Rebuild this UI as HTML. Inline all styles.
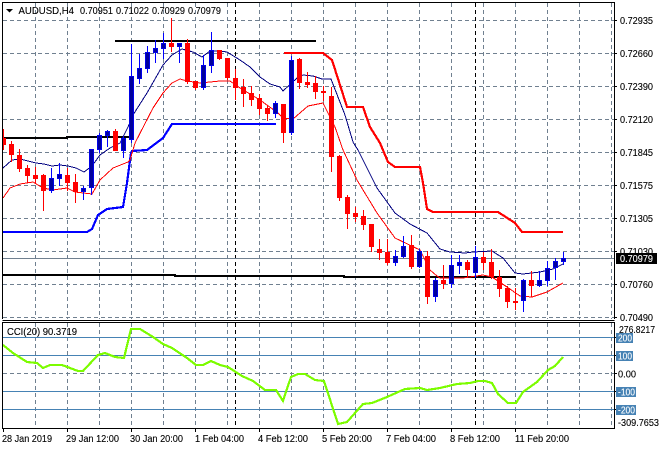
<!DOCTYPE html>
<html>
<head>
<meta charset="utf-8">
<style>
html,body{margin:0;padding:0;background:#fff;width:660px;height:450px;overflow:hidden}
svg{display:block}
text{font-family:"Liberation Sans",sans-serif;font-size:10.5px;fill:#000;stroke:#000;stroke-width:.12px}
</style>
</head>
<body>
<svg width="660" height="450" viewBox="0 0 660 450" xmlns="http://www.w3.org/2000/svg">
<rect width="660" height="450" fill="#fff"/>
<!-- grid main -->
<path shape-rendering="crispEdges" fill="none" stroke="#708090" stroke-width="1" stroke-dasharray="4 3" d="M3 20.5H614M3 53.5H614M3 86.5H614M3 119.5H614M3 152.5H614M3 185.5H614M3 218.5H614M3 251.5H614M3 284.5H614M3 317.5H614
M35.5 3V319M67.5 3V319M99.5 3V319M131.5 3V319M163.5 3V319M195.5 3V319M227.5 3V319M259.5 3V319M291.5 3V319M323.5 3V319M355.5 3V319M387.5 3V319M419.5 3V319M451.5 3V319M483.5 3V319M515.5 3V319M547.5 3V319M579.5 3V319M611.5 3V319
M35.5 323V428M67.5 323V428M99.5 323V428M131.5 323V428M163.5 323V428M195.5 323V428M227.5 323V428M259.5 323V428M291.5 323V428M323.5 323V428M355.5 323V428M387.5 323V428M419.5 323V428M451.5 323V428M483.5 323V428M515.5 323V428M547.5 323V428M579.5 323V428M611.5 323V428
M3 373.5H614"/>
<!-- period separators -->
<path shape-rendering="crispEdges" fill="none" stroke="#000" stroke-width="1" stroke-dasharray="4 3" d="M235.5 3V319M475.5 3V319M235.5 323V428M475.5 323V428"/>
<!-- price line -->
<path shape-rendering="crispEdges" stroke="#708090" d="M3 258.5H614"/>
<!-- CCI levels -->
<path shape-rendering="crispEdges" stroke="#4682b4" d="M3 337.5H614M3 355.5H614M3 391.5H614M3 409.5H614"/>
<!-- black lines -->
<path fill="none" stroke="#000" stroke-width="2" shape-rendering="crispEdges" d="M115 41H316M3 138H67V137H130M3 275H175V276H344V277H516"/>
<!-- thick blue -->
<path fill="none" stroke="#0000ff" stroke-width="2.2" shape-rendering="crispEdges" d="M3 232H87L92 229L98 215L107 209L123 207L127 183L131 153L132 151L147 150L163 138L172 124H276"/>
<!-- thick red -->
<path fill="none" stroke="#ff0000" stroke-width="2.2" shape-rendering="crispEdges" d="M284 53H323L332 60L347 107H363L370 127L380 143L388 162L395 167H420L423 183L427 209L433 212H498L515 223L522 232H563"/>
<!-- navy MA -->
<path fill="none" stroke="#000080" stroke-width="1" shape-rendering="crispEdges" d="M3 168L12 160L20 159L28 161L36 163L44 164L52 166L60 165L68 166L76 168L84 172L92 166L100 155L110 148L120 143L128 127L133 115L147 93L163 65L172 55L182 49L193 52L202 57L210 51L220 51L227 52L240 60L250 67L260 77L270 84L280 87L283 91L297 78L303 75L313 76L322 79L331 79L345 115L353 142L358 150L377 188L395 213L410 224L427 233L440 249L450 252L465 253L473 252L492 251L503 258L515 273L523 274L540 272L553 269L563 264"/>
<!-- red MA -->
<path fill="none" stroke="#ff0000" stroke-width="1" shape-rendering="crispEdges" d="M3 198L10 188L20 184L33 182L43 188L53 190L67 188L75 192L92 194L100 180L113 168L128 162L130 160L135 143L153 108L163 93L172 83L180 79L187 81L200 83L220 81L230 81L240 88L260 100L278 113L283 118L293 119L308 106L323 103L328 113L335 127L343 150L357 180L377 213L395 238L420 250L430 270L437 276L440 278L463 278L483 275L492 277L507 287L520 296L532 297L547 292L563 283"/>
<!-- wicks red -->
<path shape-rendering="crispEdges" stroke="#ff0000" fill="none" d="M3.5 129V150M11.5 141V162M19.5 149V172M27.5 165V183M35.5 167V183M43.5 174V211M67.5 168V191M75.5 174V203M115.5 129V151M171.5 18V52M187.5 39V84M195.5 81V90M219.5 50V60M227.5 58V80M235.5 69V100M243.5 79V107M251.5 86V106M259.5 94V115M267.5 106V121M283.5 104V143M299.5 58V89M307.5 72V88M315.5 76V99M323.5 86V101M331.5 87V172M339.5 155V201M347.5 195V229M355.5 207V222M363.5 210V230M371.5 224V252M379.5 239V260M387.5 239V265M411.5 235V269M427.5 251V304M443.5 265V289M467.5 260V278M483.5 252V270M491.5 249V279M499.5 270V297M507.5 286V308M515.5 288V310M531.5 271V297"/>
<!-- bodies red -->
<path shape-rendering="crispEdges" fill="#ff0000" d="M3 138h3v7h-3zM9 144h5v11h-5zM17 155h5v14h-5zM25 168h5v8h-5zM33 175h5v4h-5zM41 175h5v16h-5zM65 175h5v8h-5zM73 182h5v10h-5zM113 131h5v20h-5zM169 43h5v4h-5zM185 43h5v39h-5zM193 81h5v7h-5zM217 50h5v9h-5zM225 58h5v20h-5zM233 78h5v10h-5zM241 87h5v7h-5zM249 93h5v7h-5zM257 98h5v11h-5zM265 108h5v6h-5zM281 104h5v29h-5zM297 59h5v24h-5zM305 82h5v3h-5zM313 83h5v9h-5zM321 91h5v2h-5zM329 96h5v61h-5zM337 156h5v42h-5zM345 197h5v17h-5zM353 213h5v4h-5zM361 216h5v9h-5zM369 224h5v23h-5zM377 249h5v4h-5zM385 252h5v11h-5zM409 245h5v22h-5zM425 256h5v41h-5zM441 280h5v4h-5zM465 262h5v8h-5zM481 257h5v6h-5zM489 262h5v15h-5zM497 277h5v12h-5zM505 288h5v14h-5zM513 301h5v2h-5zM529 280h5v6h-5z"/>
<!-- wicks blue -->
<path shape-rendering="crispEdges" stroke="#0000ff" fill="none" d="M51.5 168V193M59.5 163V186M83.5 186V200M91.5 149V195M99.5 133V153M107.5 130V147M123.5 136V158M131.5 44V143M139.5 54V84M147.5 46V73M155.5 40V63M163.5 33V59M179.5 43V63M203.5 55V90M211.5 32V73M275.5 101V118M291.5 56V135M395.5 250V266M403.5 236V258M419.5 249V268M435.5 278V302M451.5 255V288M459.5 255V274M475.5 246V278M523.5 279V312M539.5 271V287M547.5 261V286M555.5 258V280M563.5 252V265"/>
<!-- bodies blue -->
<path shape-rendering="crispEdges" fill="#00009c" stroke="#0000e8" d="M49.5 178.5h4v12h-4zM57.5 174.5h4v4h-4zM81.5 188.5h4v3h-4zM89.5 149.5h4v38h-4zM97.5 135.5h4v14h-4zM105.5 131.5h4v4h-4zM121.5 138.5h4v12h-4zM129.5 76.5h4v63h-4zM137.5 68.5h4v10h-4zM145.5 52.5h4v16h-4zM153.5 48.5h4v4h-4zM161.5 43.5h4v5h-4zM177.5 43.5h4v3h-4zM201.5 65.5h4v22h-4zM209.5 50.5h4v15h-4zM273.5 103.5h4v10h-4zM289.5 60.5h4v72h-4zM393.5 256.5h4v6h-4zM401.5 246.5h4v10h-4zM417.5 251.5h4v15h-4zM433.5 280.5h4v16h-4zM449.5 265.5h4v18h-4zM457.5 262.5h4v3h-4zM473.5 257.5h4v15h-4zM521.5 280.5h4v20h-4zM537.5 280.5h4v5h-4zM545.5 268.5h4v12h-4zM553.5 261.5h4v6h-4zM561.5 258.5h4v3h-4z"/>
<!-- CCI -->
<path fill="none" stroke="#7cfc00" stroke-width="2.2" shape-rendering="crispEdges" d="M3 345L13 353L27 362L37 363L43 368L50 365L62 365L70 368L78 371L83 371L98 355L105 353L115 357L124 358L131 329L140 329L153 337L163 344L172 348L187 358L196 365L203 365L211 361L220 365L228 367L242 376L253 381L265 390L276 390L283 401L291 377L298 374L305 374L315 380L324 381L338 424L347 422L363 404L372 403L387 397L405 389L420 388L427 390L440 388L457 384L470 383L478 381L485 381L492 383L498 394L508 403L516 403L523 392L537 382L548 370L555 366L563 357"/>
<!-- frames -->
<path shape-rendering="crispEdges" fill="none" stroke="#000" d="M2.5 319V2.500H614.500V319M2.500 320.500H614.500M2.500 322.500H614.500V428.500H2.500ZM614 20.500h3M614 53.500h3M614 86.500h3M614 119.500h3M614 152.500h3M614 185.500h3M614 218.500h3M614 251.500h3M614 284.500h3M614 317.500h3M614 337.500h3M614 355.500h3M614 373.500h3M614 391.500h3M614 409.500h3M3.500 428v4M67.500 428v4M131.500 428v4M195.500 428v4M259.500 428v4M323.500 428v4M387.500 428v4M451.500 428v4M515.500 428v4"/>
<!-- header -->
<path d="M6 9h7l-3.500 3.500z" fill="#000"/>
<text x="18.500" y="14" textLength="55.500" lengthAdjust="spacingAndGlyphs">AUDUSD,H4</text>
<text x="80" y="14" textLength="33" lengthAdjust="spacingAndGlyphs">0.70951</text>
<text x="116" y="14" textLength="33" lengthAdjust="spacingAndGlyphs">0.71022</text>
<text x="152" y="14" textLength="33" lengthAdjust="spacingAndGlyphs">0.70929</text>
<text x="188" y="14" textLength="33" lengthAdjust="spacingAndGlyphs">0.70979</text>
<text x="7" y="335" textLength="70" lengthAdjust="spacingAndGlyphs">CCI(20) 90.3719</text>
<!-- price axis -->
<text x="620" y="24" textLength="33" lengthAdjust="spacingAndGlyphs">0.72935</text>
<text x="620" y="57" textLength="33" lengthAdjust="spacingAndGlyphs">0.72660</text>
<text x="620" y="90" textLength="33" lengthAdjust="spacingAndGlyphs">0.72390</text>
<text x="620" y="123" textLength="33" lengthAdjust="spacingAndGlyphs">0.72120</text>
<text x="620" y="156" textLength="33" lengthAdjust="spacingAndGlyphs">0.71845</text>
<text x="620" y="189" textLength="33" lengthAdjust="spacingAndGlyphs">0.71575</text>
<text x="620" y="222" textLength="33" lengthAdjust="spacingAndGlyphs">0.71305</text>
<text x="620" y="255" textLength="33" lengthAdjust="spacingAndGlyphs">0.71030</text>
<rect x="616" y="253" width="41" height="11" fill="#000" shape-rendering="crispEdges"/>
<text x="620" y="262" textLength="33" lengthAdjust="spacingAndGlyphs" style="fill:#fff;stroke:#fff">0.70979</text>
<text x="620" y="288" textLength="33" lengthAdjust="spacingAndGlyphs">0.70760</text>
<text x="620" y="321" textLength="33" lengthAdjust="spacingAndGlyphs">0.70490</text>
<!-- CCI axis -->
<text x="619" y="333" textLength="36" lengthAdjust="spacingAndGlyphs">276.8217</text>
<g shape-rendering="crispEdges" fill="#4682b4">
<rect x="616" y="333" width="17" height="10"/>
<rect x="616" y="351" width="17" height="10"/>
<rect x="616" y="387" width="20" height="10"/>
<rect x="616" y="405" width="20" height="10"/>
</g>
<text x="618" y="341.500" textLength="14" lengthAdjust="spacingAndGlyphs" style="fill:#fff;stroke:#fff">200</text>
<text x="618" y="359.500" textLength="14" lengthAdjust="spacingAndGlyphs" style="fill:#fff;stroke:#fff">100</text>
<text x="618" y="377.500" textLength="18" lengthAdjust="spacingAndGlyphs">0.00</text>
<text x="618" y="395.500" textLength="17" lengthAdjust="spacingAndGlyphs" style="fill:#fff;stroke:#fff">-100</text>
<text x="618" y="413.500" textLength="17" lengthAdjust="spacingAndGlyphs" style="fill:#fff;stroke:#fff">-200</text>
<text x="618" y="426" textLength="41" lengthAdjust="spacingAndGlyphs">-309.7653</text>
<!-- time axis -->
<text x="2" y="442" textLength="50" lengthAdjust="spacingAndGlyphs">28 Jan 2019</text>
<text x="66" y="442" textLength="53" lengthAdjust="spacingAndGlyphs">29 Jan 12:00</text>
<text x="130" y="442" textLength="53" lengthAdjust="spacingAndGlyphs">30 Jan 20:00</text>
<text x="195" y="442" textLength="49" lengthAdjust="spacingAndGlyphs">1 Feb 04:00</text>
<text x="258" y="442" textLength="50" lengthAdjust="spacingAndGlyphs">4 Feb 12:00</text>
<text x="322" y="442" textLength="50" lengthAdjust="spacingAndGlyphs">5 Feb 20:00</text>
<text x="386" y="442" textLength="50" lengthAdjust="spacingAndGlyphs">7 Feb 04:00</text>
<text x="450" y="442" textLength="50" lengthAdjust="spacingAndGlyphs">8 Feb 12:00</text>
<text x="515" y="442" textLength="54" lengthAdjust="spacingAndGlyphs">11 Feb 20:00</text>
</svg>
</body>
</html>
